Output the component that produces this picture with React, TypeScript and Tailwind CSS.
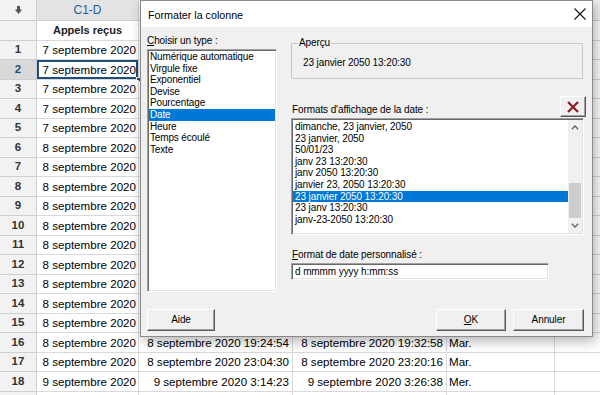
import React from "react";

const FONT = "font-['Liberation_Sans',Arial,sans-serif]";

type Row = { n: number; c1: string; c2: string; c3: string; c4: string };

const rows: Row[] = (() => {
  const out: Row[] = [];
  const base: [string, string][] = [
    ["7 septembre 2020", ""],
    ["7 septembre 2020", ""],
    ["7 septembre 2020", ""],
    ["7 septembre 2020", ""],
    ["7 septembre 2020", ""],
    ["8 septembre 2020", ""],
    ["8 septembre 2020", ""],
    ["8 septembre 2020", ""],
    ["8 septembre 2020", ""],
    ["8 septembre 2020", ""],
    ["8 septembre 2020", ""],
    ["8 septembre 2020", ""],
    ["8 septembre 2020", ""],
    ["8 septembre 2020", ""],
    ["8 septembre 2020", ""],
    ["8 septembre 2020", "Mar."],
    ["8 septembre 2020", "Mar."],
    ["9 septembre 2020", "Mer."],
  ];
  const times2: Record<number, string> = {
    16: "8 septembre 2020 19:24:54",
    17: "8 septembre 2020 23:04:30",
    18: "9 septembre 2020 3:14:23",
  };
  const times3: Record<number, string> = {
    16: "8 septembre 2020 19:32:58",
    17: "8 septembre 2020 23:20:16",
    18: "9 septembre 2020 3:26:38",
  };
  base.forEach(([d, w], i) => {
    const n = i + 1;
    out.push({ n, c1: d, c2: times2[n] ?? "", c3: times3[n] ?? "", c4: w });
  });
  return out;
})();

const GRID = "grid grid-cols-[37px_102px_154px_154px_108px_150px]";

function Sheet() {
  return (
    <div className={`${FONT} text-black`}>
      {/* header row */}
      <div className={`${GRID} h-[21px]`}>
        <div className="bg-[#f2f2f2] border-r border-b border-[#cfcfcf] flex items-center justify-center">
          <svg width="7" height="8" viewBox="0 0 7 8">
            <rect x="2" y="0" width="3" height="4" fill="#555" />
            <path d="M0 3.5 L7 3.5 L3.5 8 Z" fill="#555" />
          </svg>
        </div>
        <div className="bg-[#e3e3e3] border-r border-b border-[#cfcfcf] flex items-center justify-center text-[12px] text-[#1f5d9c]">
          C1-D
        </div>
        <div className="bg-[#f2f2f2] border-r border-b border-[#cfcfcf]" />
        <div className="bg-[#f2f2f2] border-r border-b border-[#cfcfcf]" />
        <div className="bg-[#f2f2f2] border-r border-b border-[#cfcfcf]" />
        <div className="bg-[#f2f2f2] border-b border-[#cfcfcf]" />
      </div>
      {/* names row */}
      <div className={`${GRID} h-[19.5px]`}>
        <div className="bg-[#f2f2f2] border-r border-b border-[#cfcfcf]" />
        <div className="bg-white border-r border-b border-[#d9d9d9] flex items-center justify-center text-[11px] font-bold text-[#222]">
          Appels reçus
        </div>
        <div className="bg-white border-r border-b border-[#d9d9d9]" />
        <div className="bg-white border-r border-b border-[#d9d9d9]" />
        <div className="bg-white border-r border-b border-[#d9d9d9]" />
        <div className="bg-white border-b border-[#d9d9d9]" />
      </div>
      {rows.map((r) => {
        const sel = r.n === 2;
        return (
          <div key={r.n} className={`${GRID} h-[19.5px]`}>
            <div
              className={`border-r border-b border-[#cfcfcf] flex items-center justify-center text-[11.5px] font-bold ${
                sel ? "bg-[#d9d9d9] text-[#1e4e79]" : "bg-[#f2f2f2] text-[#333]"
              }`}
            >
              {r.n}
            </div>
            <div
              className={`relative bg-white border-r border-b border-[#d9d9d9] flex items-center justify-end pr-[2px] text-[11.6px] whitespace-nowrap ${
                sel ? "shadow-[inset_0_0_0_2px_#1e4e79]" : ""
              }`}
            >
              {r.c1}
              {sel && (
                <span className="absolute right-[-3px] bottom-[-3px] w-[5px] h-[5px] bg-[#1e4e79] border border-white" />
              )}
            </div>
            <div className="bg-white border-r border-b border-[#d9d9d9] flex items-center justify-end pr-[3px] text-[11.6px] whitespace-nowrap overflow-hidden">
              {r.c2}
            </div>
            <div className="bg-white border-r border-b border-[#d9d9d9] flex items-center justify-end pr-[3px] text-[11.6px] whitespace-nowrap overflow-hidden">
              {r.c3}
            </div>
            <div className="bg-white border-r border-b border-[#d9d9d9] flex items-center pl-[2px] text-[11.6px]">
              {r.c4}
            </div>
            <div className="bg-white border-b border-[#d9d9d9]" />
          </div>
        );
      })}
      <div className={`${GRID} h-[19.5px]`}>
        <div className="bg-[#f2f2f2] border-r border-[#cfcfcf]" />
        <div className="bg-white border-r border-[#d9d9d9]" />
        <div className="bg-white border-r border-[#d9d9d9]" />
        <div className="bg-white border-r border-[#d9d9d9]" />
        <div className="bg-white border-r border-[#d9d9d9]" />
        <div className="bg-white" />
      </div>
    </div>
  );
}

const raised =
  "bg-[#f0f0f0] border-t border-l border-t-white border-l-white border-b border-r border-b-[#5a5a5a] border-r-[#5a5a5a] shadow-[inset_-1px_-1px_0_#a0a0a0]";
const sunken =
  "border border-t-[#a0a0a0] border-l-[#a0a0a0] border-b-white border-r-white shadow-[inset_1px_1px_0_#696969,inset_-1px_-1px_0_#e3e3e3]";

const types = [
  "Numérique automatique",
  "Virgule fixe",
  "Exponentiel",
  "Devise",
  "Pourcentage",
  "Date",
  "Heure",
  "Temps écoulé",
  "Texte",
];

const formats = [
  "dimanche, 23 janvier, 2050",
  "23 janvier, 2050",
  "50/01/23",
  "janv 23 13:20:30",
  "janv 2050 13:20:30",
  "janvier 23, 2050 13:20:30",
  "23 janvier 2050 13:20:30",
  "23 janv 13:20:30",
  "janv-23-2050 13:20:30",
];

function Dialog() {
  const txt = "text-[10px] tracking-[-0.1px] leading-[12px]";
  return (
    <div
      className={`${FONT} absolute left-[140px] top-0 w-[453px] h-[337px] bg-[#f0f0f0] border border-[#8a8a8a] shadow-[3px_4px_12px_rgba(0,0,0,0.3)] flex flex-col text-black`}
    >
      <div className="h-[26px] bg-white flex items-center justify-between pl-[7px] pr-[6px]">
        <span className="text-[10.7px] leading-[12px] pt-[1px]">Formater la colonne</span>
        <svg width="12" height="12" viewBox="0 0 12 12">
          <path d="M0.5 0.5 L11.5 11.5 M11.5 0.5 L0.5 11.5" stroke="#111" strokeWidth="1.1" />
        </svg>
      </div>
      <div className="flex-1 flex flex-col px-[6px]">
        <div className="flex gap-[14px]">
          {/* left column */}
          <div className="w-[130px] flex flex-col">
            <div className={`${txt} mt-[8px]`}>
              <span className="underline underline-offset-[1px]">C</span>hoisir un type :
            </div>
            <div className={`${sunken} mt-[2px] h-[243px] bg-white py-[1px] px-[1px]`}>
              {types.map((t) => (
                <div
                  key={t}
                  className={`text-[10px] tracking-[-0.15px] leading-[11.6px] pl-[1px] h-[11.6px] whitespace-nowrap ${
                    t === "Date" ? "bg-[#0078d7] text-white" : ""
                  }`}
                >
                  {t}
                </div>
              ))}
            </div>
          </div>
          {/* right column */}
          <div className="w-[295px] flex flex-col">
            <fieldset className="mt-[10px] w-[292px] h-[42px] border border-[#c8c8c8] rounded-[1px]">
              <legend className={`${txt} ml-[6px] px-[1px]`}>Aperçu</legend>
              <div className={`${txt} pl-[11px] pt-[8px]`}>23 janvier 2050 13:20:30</div>
            </fieldset>
            <div className="mt-[17px] flex items-end justify-between">
              <div className={`${txt} mb-[1px] pl-[1px]`}>Formats d'affichage de la date :</div>
              <div className={`${raised} w-[26px] h-[21px] flex items-center justify-center`}>
                <svg width="12" height="12" viewBox="0 0 12 12">
                  <path d="M1 1 L11 11 M11 1 L1 11" stroke="#8b1a22" strokeWidth="2.2" />
                </svg>
              </div>
            </div>
            <div className={`${sunken} mt-[1px] w-[293px] h-[117px] bg-white p-[1px] flex`}>
              <div className="flex-1 pt-[1px]">
                {formats.map((f) => (
                  <div
                    key={f}
                    className={`text-[10px] tracking-[-0.1px] leading-[11.6px] h-[11.6px] pl-[2px] whitespace-nowrap ${
                      f === "23 janvier 2050 13:20:30" ? "bg-[#0078d7] text-white" : ""
                    }`}
                  >
                    {f}
                  </div>
                ))}
              </div>
              <div className="w-[14px] bg-[#f0f0f0] flex flex-col">
                <div className="h-[15px] flex items-center justify-center">
                  <svg width="8" height="5" viewBox="0 0 8 5">
                    <path d="M0.8 4.2 L4 1 L7.2 4.2" stroke="#606060" strokeWidth="1.3" fill="none" />
                  </svg>
                </div>
                <div className="flex-1 flex flex-col justify-end px-[1px]">
                  <div className="h-[35px] bg-[#cdcdcd]" />
                </div>
                <div className="h-[15px] flex items-center justify-center">
                  <svg width="8" height="5" viewBox="0 0 8 5">
                    <path d="M0.8 0.8 L4 4 L7.2 0.8" stroke="#606060" strokeWidth="1.3" fill="none" />
                  </svg>
                </div>
              </div>
            </div>
            <div className={`${txt} mt-[14px] pl-[1px]`}>
              <span className="underline underline-offset-[1px]">F</span>ormat de date personnalisé :
            </div>
            <div className={`${sunken} mt-[2px] w-[258px] h-[17px] bg-white flex items-center pl-[3px]`}>
              <span className="text-[10px] tracking-[-0.1px] leading-[12px]">d mmmm yyyy h:mm:ss</span>
            </div>
          </div>
        </div>
        {/* buttons */}
        <div className="mt-[17px] flex items-center mr-[2px]">
          <div className={`${raised} w-[68px] h-[22px] flex items-center justify-center ${txt}`}>Aide</div>
          <div className="flex-1" />
          <div className={`${raised} w-[70px] h-[22px] flex items-center justify-center ${txt}`}>
            <span className="underline underline-offset-[1px]">O</span>K
          </div>
          <div className={`${raised} ml-[7px] w-[71px] h-[22px] flex items-center justify-center ${txt}`}>
            Annuler
          </div>
        </div>
      </div>
    </div>
  );
}

export default function App() {
  return (
    <div className="relative w-[600px] h-[395px] overflow-hidden bg-white">
      <Sheet />
      <Dialog />
    </div>
  );
}
